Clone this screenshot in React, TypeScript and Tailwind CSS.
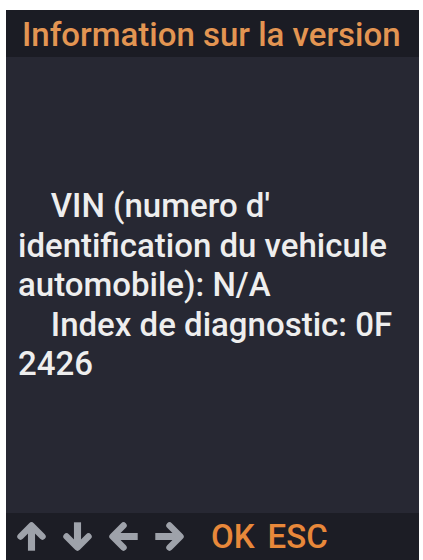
import React from "react";

function Arrow({ rot }: { rot: number }) {
  return (
    <svg width="31" height="31" viewBox="0 0 24 24" style={{ transform: `rotate(${rot}deg)` }}>
      <path d="M12 23V6" stroke="#9ea2aa" strokeWidth="5.5" strokeLinecap="butt" fill="none" />
      <path d="M3.5 12L12 3.5l8.5 8.5" stroke="#9ea2aa" strokeWidth="5" strokeLinecap="round" strokeLinejoin="round" fill="none" />
    </svg>
  );
}

export default function App() {
  return (
    <div className="w-[423px] h-[560px] bg-white pt-[10px] pl-[6px] pr-[4px] overflow-hidden" style={{ fontFamily: "Roboto, 'Noto Sans', sans-serif" }}>
      <div className="h-[550px] flex flex-col bg-[#272833]">
        <div className="h-[47px] bg-[#1b1c24] pl-[16px] pt-[2px] text-[33px] leading-[45px] text-[#e39552] whitespace-nowrap font-medium">
          Information sur la version
        </div>
        <div className="flex-1 flex items-center pl-[12px]">
          <div className="text-[33px] leading-[39.5px] text-[#eeeeee] whitespace-pre font-medium">
            {"    VIN (numero d'\nidentification du vehicule\nautomobile): N/A\n    Index de diagnostic: 0F\n2426"}
          </div>
        </div>
        <div className="h-[47px] bg-[#1c1d25] flex items-center pl-[10px]">
          <div className="flex items-center gap-[15px]">
            <Arrow rot={0} />
            <Arrow rot={180} />
            <Arrow rot={270} />
            <Arrow rot={90} />
          </div>
          <span className="ml-[26px] text-[33px] leading-none text-[#e8883a] font-medium">OK</span>
          <span className="ml-[13px] text-[33px] leading-none text-[#e8883a] font-medium">ESC</span>
        </div>
      </div>
    </div>
  );
}
